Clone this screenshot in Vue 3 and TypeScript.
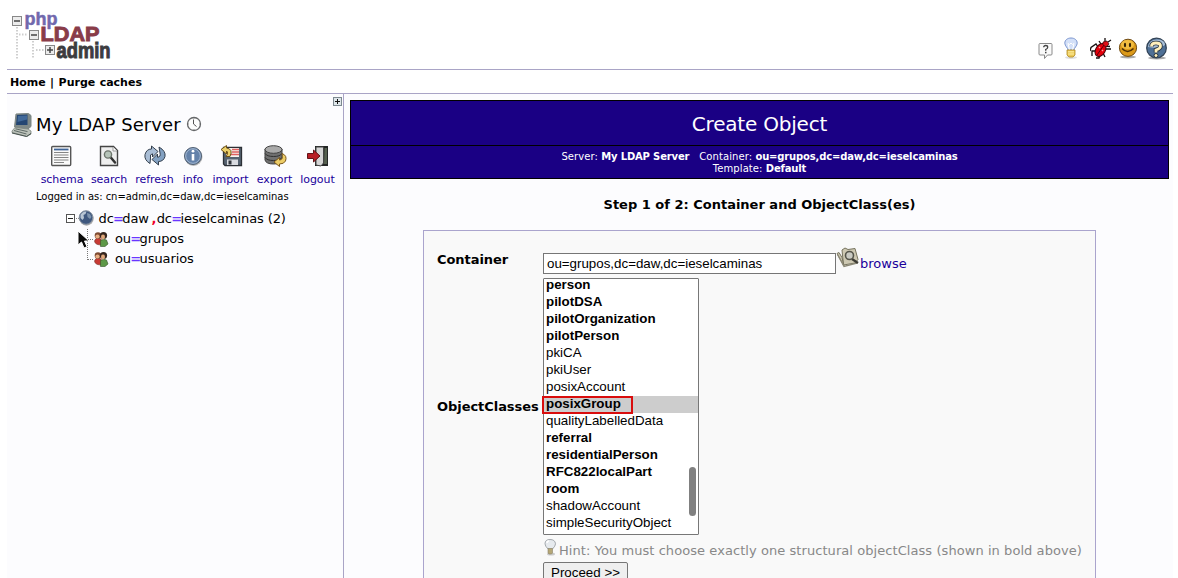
<script setup lang="ts">
interface Tool { name: string; width: number }
interface ObjectClass { name: string; structural: boolean; selected?: boolean }

const tools: Tool[] = [
  { name: 'schema', width: 48 },
  { name: 'search', width: 46 },
  { name: 'refresh', width: 45 },
  { name: 'info', width: 32 },
  { name: 'import', width: 43 },
  { name: 'export', width: 45 },
  { name: 'logout', width: 41 },
]

const objectClasses: ObjectClass[] = [
  { name: 'person', structural: true },
  { name: 'pilotDSA', structural: true },
  { name: 'pilotOrganization', structural: true },
  { name: 'pilotPerson', structural: true },
  { name: 'pkiCA', structural: false },
  { name: 'pkiUser', structural: false },
  { name: 'posixAccount', structural: false },
  { name: 'posixGroup', structural: true, selected: true },
  { name: 'qualityLabelledData', structural: false },
  { name: 'referral', structural: true },
  { name: 'residentialPerson', structural: true },
  { name: 'RFC822localPart', structural: true },
  { name: 'room', structural: true },
  { name: 'shadowAccount', structural: false },
  { name: 'simpleSecurityObject', structural: false },
]

const units = ['grupos', 'usuarios']
</script>

<template>
  <div class="page">
    <header class="head">
      <svg class="logo" width="104" height="50" viewBox="0 0 104 50">
        <g stroke="#cfcfcf" stroke-dasharray="1.5 1.5" stroke-width="2" fill="none">
          <path d="M7 17V49M9 24.500h9M23 31V49M26 40h9" />
        </g>
        <g fill="#ececec" stroke="#888">
          <rect x="2.500" y="6.500" width="9" height="9" />
          <rect x="19.500" y="20.500" width="9" height="9" />
          <rect x="35.500" y="35.500" width="9" height="9" />
        </g>
        <path d="M4 11h6M21 25h6M37 40h6M40 37v6" stroke="#444" stroke-width="1.500" />
        <g font-family="Liberation Sans, Arial, sans-serif" font-weight="bold">
          <text x="14.500" y="14.500" font-size="18" textLength="33" lengthAdjust="spacingAndGlyphs" fill="#7168ad" stroke="#7168ad" stroke-width=".5">php</text>
          <text x="30.500" y="30.500" font-size="19.500" textLength="59" lengthAdjust="spacingAndGlyphs" fill="#893c49" stroke="#893c49" stroke-width=".9">LDAP</text>
          <text x="46.500" y="47.700" font-size="22" textLength="54" lengthAdjust="spacingAndGlyphs" fill="#3c3c3f" stroke="#3c3c3f" stroke-width="1">admin</text>
        </g>
      </svg>
      <div class="head-icons">
        <svg width="16" height="17" viewBox="0 0 16 17">
          <path d="M2 1.500h11q1 0 1 1V12q0 1-1 1H9.500L6.500 16.500V13H2q-1 0-1-1V2.500q0-1 1-1z" fill="#fafafa" stroke="#8a8a8a" />
          <path d="M5.700 5.300q0-1.800 2-1.800t2 1.700q0 1.300-2 2.300v1.200" fill="none" stroke="#444" stroke-width="1.300" />
          <rect x="7" y="9.800" width="1.500" height="1.500" fill="#444" />
        </svg>
        <svg class="i-bulb" width="14" height="22" viewBox="0 0 14 22">
          <ellipse cx="7" cy="20.500" rx="6" ry="1.500" fill="#ddd" />
          <path d="M4 13C4 11 .8 9 .8 6.200.8 3 3.500 1 7 1s6.200 2 6.200 5.200C13.200 9 10 11 10 13z" fill="#d3e0f8" stroke="#7b95cf" />
          <path d="M5.500 13L4 6.500l1.500 1L7 6l1.500 1.500L10 6.500 8.500 13" fill="none" stroke="#fff" />
          <path d="M3 13h8v5L9 20H5L3 18z" fill="#ebc95a" stroke="#b18b21" stroke-width=".8" />
          <path d="M4 14.800h6M4 17h6" stroke="#fff0a0" />
        </svg>
        <svg class="i-bug" width="22" height="22" viewBox="0 0 22 22">
          <g fill="none" stroke="#171010" stroke-width="1.300">
            <path d="M8 9L6 6 1 9.500 0 13M6 13H2v5M10 17l-1 3H6M13 15l2 4M15 11h6M14 8l6 .500M11 6L9 3M15 4V0M18 4l3-2" />
          </g>
          <ellipse cx="10.500" cy="12" rx="4.800" ry="7" transform="rotate(32 10.500 12)" fill="#e5000c" stroke="#45040a" />
          <path d="M13 4l4-1 2 3-3 3-3-2z" fill="#de1017" stroke="#45040a" stroke-width=".7" />
          <path d="M14 7L7 17" stroke="#5c0008" /><path d="M9 9l1 1M12 12l1 1" stroke="#ff9b9b" stroke-width="1.500" />
        </svg>
        <svg class="i-smile" width="20" height="21" viewBox="0 0 20 21">
          <ellipse cx="10" cy="19" rx="8" ry="1.500" fill="#aaa" />
          <circle cx="10" cy="9.800" r="8.600" fill="#dc9a1a" stroke="#6f4a12" />
          <ellipse cx="9.500" cy="6.500" rx="6.500" ry="4.500" fill="#f2bd40" />
          <ellipse cx="7" cy="7" rx="1.100" ry="2.200" fill="#352306" /><ellipse cx="12" cy="7" rx="1.100" ry="2.200" fill="#352306" />
          <path d="M4 10.500q5.500 6 11.500 0" fill="none" stroke="#4d3005" stroke-width="1.500" />
        </svg>
        <svg class="i-help" width="23" height="23" viewBox="0 0 23 23">
          <ellipse cx="12" cy="21" rx="9" ry="1.500" fill="#aaa" />
          <circle cx="11.500" cy="11" r="9.800" fill="#4f7096" stroke="#334457" stroke-width="1.300" />
          <path d="M3 10Q4 2.500 12 2.500T20 8Q14 12 3 10" fill="#a9bfd7" />
          <path d="M6.500 9.500q0-3.500 4.500-3.500t4.500 3q0 2.500-4.500 4v2.500" fill="none" stroke="#26323e" stroke-width="4.500" />
          <path d="M6.500 9.500q0-3.500 4.500-3.500t4.500 3q0 2.500-4.500 4v2.500" fill="none" stroke="#fff0bc" stroke-width="2.800" />
          <circle cx="11" cy="18.500" r="2" fill="#fff0bc" stroke="#26323e" />
        </svg>
      </div>
    </header>

    <nav class="menu"><a>Home</a> | <a>Purge caches</a></nav>

    <div class="body">
      <aside class="side">
        <svg class="expand" width="9" height="9" viewBox="0 0 9 9">
          <rect x=".5" y=".5" width="8" height="8" fill="#dfe7ea" stroke="#7d8990" /><path d="M2 4.500h5M4.500 2v5" stroke="#111" />
        </svg>
        <div class="server">
          <svg width="22" height="25" viewBox="0 0 22 25">
            <path d="M5 2L17.500 1.500 20 3.500v11l-3 2.500L3.500 15z" fill="#7f8988" stroke="#7b8482" />
            <path d="M6 3l10.500-.5v10.500L5 13z" fill="#244673" /><path d="M7 4l9-.5v4L6.500 10z" fill="#41699a" />
            <path d="M4 15.500l13 1.500 3 2v3l-4 2.500L1 20.500v-1.500z" fill="#bcc2ba" stroke="#7c8580" stroke-width=".8" />
            <path d="M3 18.500l12.500 3.500M4.500 16.800l12 2.800" stroke="#5f6a67" /><path d="M1 21l14.500 3.500 4.500-3" stroke="#46514d" fill="none" />
          </svg>
          <span class="server-name">My LDAP Server</span>
          <svg class="clock" width="16" height="16" viewBox="0 0 16 16">
            <circle cx="8" cy="8" r="6.500" fill="#fdfdfd" stroke="#66686a" stroke-width="1.300" /><path d="M7.500 3.500V8l3 2.500" fill="none" stroke="#555" />
            <path d="M8 2v1M8 13v1M2 8h1M13 8h1" stroke="#999" />
          </svg>
        </div>

        <ul class="tools">
          <li v-for="t in tools" :key="t.name" :style="{ width: t.width + 'px' }">
            <svg width="24" height="24" viewBox="0 0 24 24">
              <template v-if="t.name === 'schema'">
                <rect x="1.700" y="2.500" width="19" height="19" rx="1" fill="#fafafa" stroke="#555" stroke-width="1.400" />
                <path d="M4 5.500h14.500" stroke="#3f6497" stroke-width="1.800" />
                <path d="M4 8.500h14.500M4 11h14.500M4 13.500h14.500M4 16h14.500M4 18.500h10" stroke="#858585" />
              </template>
              <template v-else-if="t.name === 'search'">
                <path d="M3.500 2.500h13l4 4V21.500h-17z" fill="#eee" stroke="#444" stroke-width="1.400" />
                <path d="M16 3v4h4" fill="#fff" stroke="#999" /><path d="M13 12.500l5 6" stroke="#333" stroke-width="2.500" stroke-linecap="round" />
                <circle cx="11" cy="10.500" r="3.600" fill="#b6c4b9" stroke="#6d756c" stroke-width="1.400" />
              </template>
              <template v-else-if="t.name === 'refresh'">
                <path d="M7 19.500Q1 16 2 10.500 3.500 5 8.500 5V2L15 7.500 9.500 13v-3.200Q6.500 10 7.500 14z" fill="#a9bdd5" stroke="#333f4d" stroke-linejoin="round" />
                <path d="M16 3q7 4 6 9.500-1.500 5-6.500 5v3.500L9 15.500 14.500 10v3.200q3.500-.2 2.500-4.200z" fill="#83a1c2" stroke="#333f4d" stroke-linejoin="round" />
              </template>
              <template v-else-if="t.name === 'info'">
                <circle cx="12.500" cy="13" r="9" fill="#bbb" /><circle cx="12" cy="12" r="8.500" fill="#6482aa" stroke="#526173" />
                <circle cx="12" cy="12" r="7.300" fill="none" stroke="#a3b7d1" />
                <path d="M12 10v6.500" fill="none" stroke="#fff" stroke-width="2.600" /><circle cx="12" cy="7.200" r="1.400" fill="#fff" />
              </template>
              <template v-else-if="t.name === 'import'">
                <path d="M4.500 3.500h18v18H6l-1.500-1.500z" fill="#566270" stroke="#2c3036" stroke-width="1.300" />
                <rect x="7" y="4" width="13" height="9" fill="#f7f3ef" /><path d="M13 5.500h7M13 8h7M8 10.500h12" stroke="#e06060" stroke-width="1.300" />
                <rect x="8" y="15.500" width="11" height="5.500" fill="#d9dbe0" /><rect x="9.500" y="16.500" width="3" height="4" fill="#30343a" />
                <path d="M7 12.500q3-4 .5-5.500v3L2 5.500l5.500-4v2.500q7 1 3.500 8.500z" fill="#ecd06a" stroke="#6f531a" />
              </template>
              <template v-else-if="t.name === 'export'">
                <path d="M2 5v11q1 4 8.500 4t8.500-4V5z" fill="#707070" stroke="#3f3f3f" />
                <ellipse cx="10.500" cy="5.500" rx="8.500" ry="3.800" fill="#aaa" stroke="#444" /><path d="M2 9.500q2 3 8.500 3t8.500-3M2 13.500q2 3 8.500 3t8.500-3" fill="none" stroke="#303030" />
                <path d="M19 9.500q5.500 2 3.500 7.500-1.500 3-6 3v2.500L11 18l5.500-4.500v2.500q4 0 2.500-6.500z" fill="#edcd67" stroke="#79571d" />
              </template>
              <template v-else>
                <rect x="9" y="2" width="13" height="20" fill="#232625" /><path d="M10 3h7.500v16L15 22l-5-1z" fill="#d5d5d5" stroke="#444" />
                <path d="M18.500 4H21v16h-3z" fill="#55604f" /><path d="M1.500 9.500h6V6L14 12l-6.500 6v-3.500h-6z" fill="#b81f26" stroke="#631519" />
              </template>
            </svg>
            <a>{{ t.name }}</a>
          </li>
        </ul>

        <div class="login">Logged in as: cn=admin,dc=daw,dc=ieselcaminas</div>

        <div class="tree">
          <div class="root">
            <svg width="33" height="18" viewBox="0 0 33 18">
              <rect x="1.500" y="5.500" width="8" height="8" fill="#fff" stroke="#555" /><path d="M3 9.500h5" stroke="#222" />
              <path d="M11 9.500h3" stroke="#888" stroke-dasharray="1 1" />
              <circle cx="21.500" cy="9.500" r="7.200" fill="#aaa" /><circle cx="21" cy="8.500" r="6.800" fill="#3f587f" stroke="#8792a1" />
              <path d="M15.500 6q2-4 6-3.500l-1 2.500-2 1 .5 3-1.500 2-2-2z" fill="#b9c6d4" /><path d="M22 4l3 1 1.500 3-1.500 2-2.500-2z" fill="#7d93ad" />
            </svg>
            <span>dc<b class="eq">=</b>daw<b class="comma">,</b>dc<b class="eq">=</b>ieselcaminas (2)</span>
          </div>
          <div v-for="(u, i) in units" :key="u" class="unit">
            <svg width="29" height="20" viewBox="0 0 29 20">
              <path :d="i === 0 ? 'M1.500 0V20' : 'M1.500 0V11'" stroke="#777" stroke-dasharray="1 1" />
              <path d="M2 10.500h6" stroke="#777" stroke-dasharray="1 1" />
              <path d="M8.500 12q1-3 3.500-3 3 0 4 3v4q-6 0-7-2.500z" fill="#c83a34" stroke="#74322a" stroke-width=".6" />
              <path d="M14.500 11.500q3-2 6-.5l1.500 4-3 2.500h-4.500z" fill="#5d9848" stroke="#35542c" stroke-width=".6" />
              <circle cx="12" cy="6.500" r="3.300" fill="#7d4a32" /><circle cx="11.500" cy="7.500" r="2.100" fill="#e8af83" />
              <circle cx="17.500" cy="6.500" r="3.600" fill="#34251e" /><ellipse cx="17" cy="8" rx="2" ry="2.400" fill="#e0a87c" />
            </svg>
            <span>ou<b class="eq">=</b>{{ u }}</span>
          </div>
          <svg class="cursor" width="13" height="19" viewBox="0 0 13 19">
            <path d="M1 1v14l3.500-3 2.500 6 3-1.300-2.500-5.700H12z" fill="#080808" stroke="#fff" />
          </svg>
        </div>
      </aside>

      <main class="main">
        <h1 class="title">Create Object</h1>
        <div class="subtitle">
          <div class="sub-one"><span>Server: <b>My LDAP Server</b></span><span>Container: <b>ou=grupos,dc=daw,dc=ieselcaminas</b></span></div>
          <div class="sub-two">Template: <b>Default</b></div>
        </div>
        <h2 class="step">Step 1 of 2: Container and ObjectClass(es)</h2>

        <form class="form" @submit.prevent>
          <label class="label-container">Container</label>
          <div class="container-row">
            <div class="field">ou=grupos,dc=daw,dc=ieselcaminas</div>
            <svg class="folder" width="25" height="23" viewBox="0 0 25 23">
              <path d="M1 6.500l2-1 3 5 2 8.500zM6 3l3-2 3 1.500 7-1 3 11-3 3.500L7.500 18z" fill="#cdc8b2" stroke="#77745f" />
              <path d="M1.500 7.500L8 19.500 21 16" fill="none" stroke="#8c8977" stroke-width="1.300" />
              <path d="M16 12l6 4" stroke="#3c3b34" stroke-width="2.200" /><circle cx="13.500" cy="8.500" r="4" fill="#c9cac2" stroke="#55554b" stroke-width="1.600" />
            </svg>
            <a class="browse">browse</a>
          </div>

          <label class="label-classes">ObjectClasses</label>
          <div class="list">
            <div v-for="o in objectClasses" :key="o.name" class="option" :class="{ structural: o.structural, selected: o.selected }">
              <span>{{ o.name }}</span><i v-if="o.selected" class="mark"></i>
            </div>
            <div class="thumb"></div>
          </div>

          <div class="hint">
            <svg width="15" height="18" viewBox="0 0 15 18">
              <ellipse cx="8" cy="16" rx="4" ry="1.500" fill="#ccc" />
              <path d="M5 11Q2 8 2 5.800 2 1.500 7 1.500t5.500 4.300Q12.500 8 9.500 11z" fill="#e6eaee" stroke="#a3a8ad" />
              <path d="M5 10.500h4.500v4.500l-1 1H6l-1-1z" fill="#b5a776" stroke="#898168" stroke-width=".6" /><path d="M4 5q0-2 2-2" fill="none" stroke="#fff" stroke-width="1.500" />
            </svg>
            <span>Hint: You must choose exactly one structural objectClass (shown in bold above)</span>
          </div>
          <button class="proceed" type="button">Proceed &gt;&gt;</button>
        </form>
      </main>
    </div>
  </div>
</template>

<style>
html, body { margin: 0; overflow: hidden; background: #fff; }
</style>

<style scoped>
* { box-sizing: border-box; }
.page { width: 1178px; height: 578px; overflow: hidden; padding: 0 5px 0 7px; font-family: "DejaVu Sans", Verdana, sans-serif; font-size: 13px; color: #000; white-space: nowrap; }
svg { display: block; flex: none; }
.head { height: 70px; border-bottom: 1px solid #a9a4c6; display: flex; justify-content: space-between; align-items: flex-start; padding: 10px 5px 0 3px; }
.head-icons { display: flex; align-items: flex-start; padding-top: 32px; }
.i-bulb { margin: -5px 0 0 10px; }
.i-bug { margin: -4px 0 0 12px; }
.i-smile { margin: -4px 0 0 6px; }
.i-help { margin: -5px 0 0 7px; }
.menu { height: 24px; border-bottom: 1px solid #a9a4c6; font-size: 11px; font-weight: bold; line-height: 25px; word-spacing: .6px; padding-left: 3px; }
.body { display: flex; height: 484px; background: #fcfcfe; }
.side { position: relative; flex: none; width: 337px; border-right: 1px solid #a9a4c6; }
.expand { position: absolute; top: 3px; right: 1px; }
.server { display: flex; padding: 17px 0 0 4px; height: 47px; }
.server > svg:first-child { margin-top: 1px; }
.server-name { width: 146px; margin-left: 3px; font-size: 18px; line-height: 27px; letter-spacing: .1px; }
.clock { margin: 5px 0 0 4px; }
.tools { list-style: none; display: flex; margin: 3px 0 0; padding: 0 0 0 31px; height: 45px; font-size: 11px; }
.tools li { display: flex; flex-direction: column; align-items: center; flex: none; }
.tools a, .browse { color: #1a009b; }
.tools a { line-height: 20px; margin-top: 2px; letter-spacing: -.05px; }
.login { font-size: 10px; line-height: 14px; padding-left: 29px; margin-top: 1px; letter-spacing: -.03px; }
.tree { position: relative; padding: 5px 0 0 58px; line-height: 18px; }
.root, .unit { display: flex; letter-spacing: -.1px; }
.unit { padding-left: 21px; height: 20px; line-height: 20px; }
.root { height: 20px; }
.root span { line-height: 20px; margin-left: .5px; }
.eq { color: #6a36ff; font-weight: bold; margin: 0 -1.4px 0 -.8px; }
.comma { color: #f00028; padding: 0 .5px 0 2.5px; }
.cursor { position: absolute; left: 70px; top: 26px; }
.main { flex: 1; padding: 6px 4px 0 6px; text-align: center; }
.title { margin: 0; height: 46px; border: 1px solid #000; background: #1a0084; color: #fff; font-size: 20px; line-height: 47px; font-weight: normal; letter-spacing: -.2px; }
.subtitle { height: 33px; border: 1px solid #000; border-top: 0; background: #1a0084; color: #fff; font-size: 10px; line-height: 12px; padding-top: 5px; letter-spacing: .08px; }
.subtitle b { letter-spacing: -.16px; }
.sub-one { display: flex; justify-content: center; gap: 10px; }
.step { margin: 0; height: 51px; line-height: 52px; font-size: 13px; font-weight: bold; }
.form { width: 673px; height: 360px; margin: 0 auto; border: 1px solid #aaa4cd; background: #f9f9f9; display: grid; grid-template-columns: 106px 1fr; grid-template-rows: 30px 257px 27px 30px; align-content: start; padding: 17px 0 0 13px; text-align: left; position: relative; }
.form label { font-weight: bold; letter-spacing: -.05px; }
.label-container { line-height: 24px; }
.label-classes { line-height: 257px; }
.container-row { display: flex; }
.field { width: 293px; height: 21px; margin-top: 5px; border: 1px solid #767676; background: #fff; font: 13.33px/19px "Liberation Sans", Arial, sans-serif; padding-left: 3px; }
.folder { margin-top: -1px; }
.browse { line-height: 31px; margin-left: -1px; }
.list { position: relative; width: 156px; height: 257px; border: 1px solid #777; border-radius: 1px; background: #fff; overflow: visible; font: 13.33px/15px "Liberation Sans", Arial, sans-serif; }
.option { height: 17px; padding-left: 2px; }
.option:first-child { height: 15px; line-height: 12px; }
.structural { font-weight: bold; }
.selected { position: relative; background: #cdcdcd; }
.mark { position: absolute; left: -2px; top: 0; width: 91px; height: 18px; border: 2px solid #d90d0d; z-index: 2; }
.thumb { position: absolute; right: 2px; top: 188px; width: 7px; height: 49px; border-radius: 4px; background: #808080; }
.hint { grid-column: 2; display: flex; color: #888; line-height: 30px; padding-top: 1px; letter-spacing: .065px; }
.hint svg { margin-top: 2px; }
.hint span { margin-left: 1px; }
.proceed { grid-column: 2; width: 85px; height: 21px; border: 1px solid #767676; border-radius: 2px; background: #efefef; font: 13.33px/19px "Liberation Sans", Arial, sans-serif; padding: 0; color: #000; }
</style>
